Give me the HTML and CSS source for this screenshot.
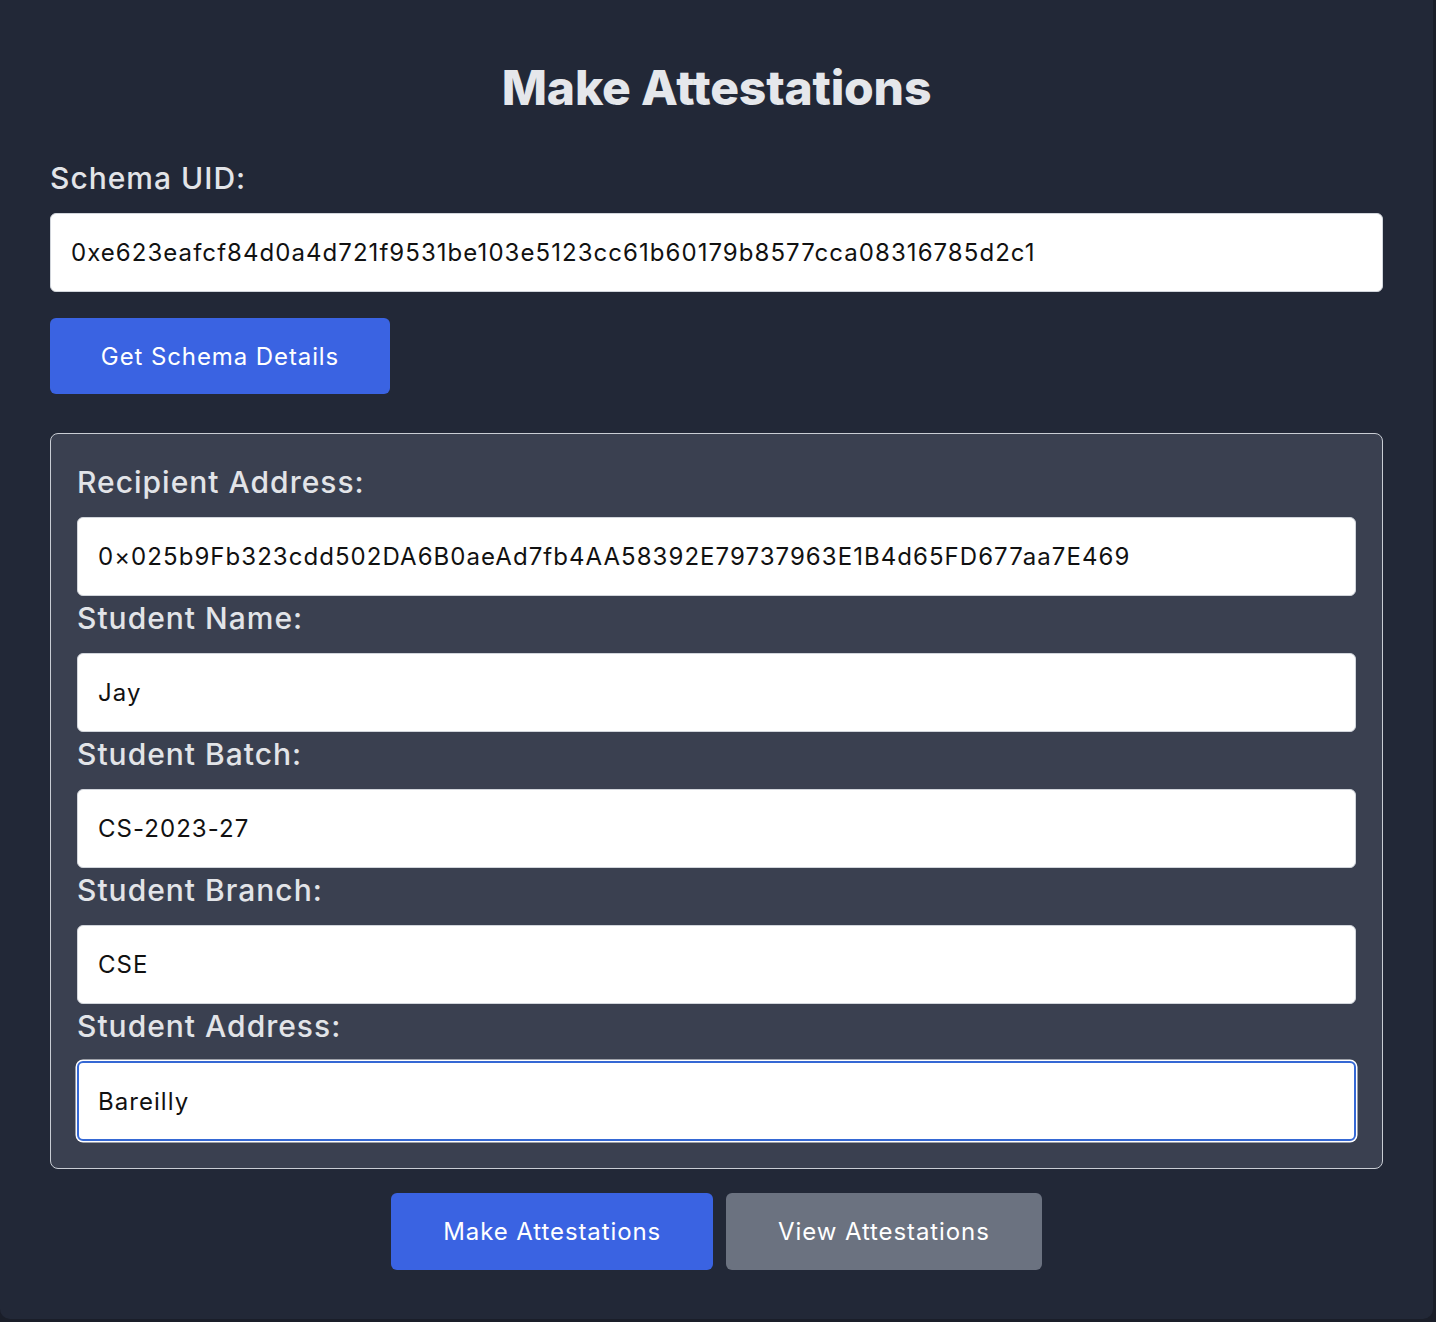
FILE: index.html
```html
<!DOCTYPE html>
<html lang="en">
<head>
<meta charset="utf-8">
<title>Make Attestations</title>
<link rel="stylesheet" href="styles.css">
</head>
<body>
<main class="card">
  <h1 class="title">Make Attestations</h1>
  <label class="label" for="schema">Schema UID:</label>
  <input class="field" id="schema" type="text" value="0xe623eafcf84d0a4d721f9531be103e5123cc61b60179b8577cca08316785d2c1">
  <button class="btn btn-primary btn-schema" type="button">Get Schema Details</button>

  <section class="panel">
    <label class="label" for="recipient">Recipient Address:</label>
    <input class="field" id="recipient" type="text" value="0×025b9Fb323cdd502DA6B0aeAd7fb4AA58392E79737963E1B4d65FD677aa7E469">
    <label class="label" for="name">Student Name:</label>
    <input class="field" id="name" type="text" value="Jay">
    <label class="label" for="batch">Student Batch:</label>
    <input class="field" id="batch" type="text" value="CS-2023-27">
    <label class="label" for="branch">Student Branch:</label>
    <input class="field" id="branch" type="text" value="CSE">
    <label class="label" for="address">Student Address:</label>
    <input class="field field-focused" id="address" type="text" value="Bareilly">
  </section>

  <div class="actions">
    <button class="btn btn-primary" type="button">Make Attestations</button>
    <button class="btn btn-gray" type="button">View Attestations</button>
  </div>
</main>
</body>
</html>
```
FILE: styles.css
```css
html, body {
  margin: 0;
  padding: 0;
  background: #1a1e29;
}

body {
  font-family: Inter, "Noto Sans", "Liberation Sans", sans-serif;
  min-height: 1322px;
}

.card {
  box-sizing: border-box;
  width: 1433px;
  background: #222837;
  border-radius: 0 0 10px 10px;
  padding: 64px 50px 49px 50px;
  display: flex;
  flex-direction: column;
  align-items: stretch;
}

.title {
  margin: 0 0 44px 0;
  font-size: 48px;
  line-height: 48px;
  font-weight: 800;
  color: #e5e7eb;
  text-align: center;
  letter-spacing: -0.2px;
}

.label {
  display: block;
  font-size: 30px;
  line-height: 45px;
  font-weight: 500;
  color: #e2e4e8;
  letter-spacing: 1px;
  margin: 0 0 12px 0;
}

.field {
  box-sizing: border-box;
  display: block;
  width: 100%;
  height: 79px;
  margin: 0;
  padding: 0 20px;
  font-family: Inter, "Noto Sans", "Liberation Sans", sans-serif;
  font-size: 24px;
  letter-spacing: 1.05px;
  color: #111111;
  background: #ffffff;
  border: 1px solid #d1d5db;
  border-radius: 6px;
  outline: none;
}

.field-focused {
  height: 80px;
  padding: 0 19px;
  border: 2px solid #3568d4;
  box-shadow: 0 0 0 1.5px #ffffff;
}

.btn {
  box-sizing: border-box;
  font-family: Inter, "Noto Sans", "Liberation Sans", sans-serif;
  font-size: 24px;
  font-weight: 400;
  letter-spacing: 0.9px;
  color: #ffffff;
  border: none;
  border-radius: 6px;
  padding: 0 52px;
  height: 77px;
  cursor: pointer;
}

.btn-primary {
  background: #3a63e2;
}

.btn-gray {
  background: #6b7280;
}

.btn-schema {
  align-self: flex-start;
  width: 340px;
  height: 76px;
  padding: 0;
  margin-top: 26px;
}

.panel {
  margin-top: 39px;
  background: #3a4050;
  border: 1px solid #c9cdd4;
  border-radius: 8px;
  padding: 26px 26px 27px 26px;
}

.panel .label {
  margin-bottom: 12px;
}

.actions {
  margin-top: 24px;
  display: flex;
  justify-content: center;
  gap: 13px;
}
```
